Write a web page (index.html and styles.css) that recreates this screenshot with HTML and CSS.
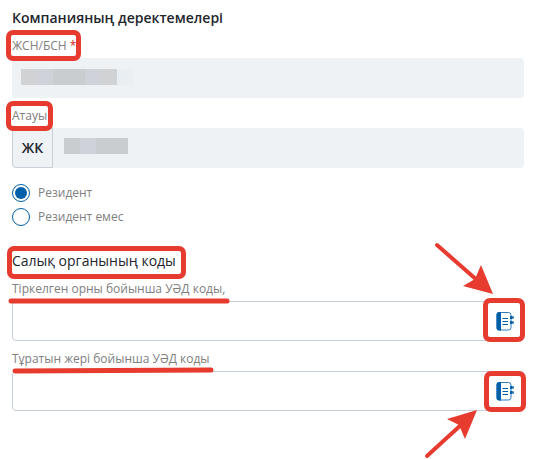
FILE: index.html
```html
<!DOCTYPE html>
<html lang="kk">
<head>
<meta charset="utf-8">
<title>Компанияның деректемелері</title>
<link rel="stylesheet" href="styles.css">
</head>
<body>
<main class="form">
  <h1 class="title">Компанияның деректемелері</h1>
  <div class="field">
    <div class="label">ЖСН/БСН <span class="required">*</span></div>
    <div class="input filled">
      <div class="mask"><i class="m1"></i><i class="m2"></i><i class="m3"></i><i class="m3"></i><i class="m2"></i><i class="m1"></i><i class="m4"></i></div>
    </div>
  </div>
  <div class="field">
    <div class="label">Атауы</div>
    <div class="input filled">
      <div class="prefix">ЖК</div>
      <div class="mask short"><i class="m3"></i><i class="m2"></i><i class="m3"></i><i class="m3"></i></div>
    </div>
  </div>
  <div class="radios">
    <div class="radio"><span class="circle checked"></span><span class="radio-text">Резидент</span></div>
    <div class="radio"><span class="circle"></span><span class="radio-text">Резидент емес</span></div>
  </div>
  <h2 class="subtitle">Салық органының коды</h2>
  <div class="field">
    <div class="label">Тіркелген орны бойынша УӘД коды,</div>
    <div class="input outlined">
      <svg class="book" viewBox="0 0 20 20"><use href="#book"/></svg>
    </div>
  </div>
  <div class="field">
    <div class="label">Тұратын жері бойынша УӘД коды</div>
    <div class="input outlined">
      <svg class="book" viewBox="0 0 20 20"><use href="#book"/></svg>
    </div>
  </div>
</main>
<svg class="defs" width="0" height="0">
  <symbol id="book" viewBox="0 0 20 20">
    <rect x="2" y="1.500" width="14" height="17.500" rx="2.500" fill="#fff" stroke="#2f7bb8" stroke-width="1"/>
    <path d="M6 1H4Q1.500 1 1.500 3.500v13.500q0 2.500 2.500 2.500h2z" fill="#005fa9"/>
    <path d="M7.500 7.500H13M7.500 10.500H13M7.500 13.500H13" stroke="#005fa9" stroke-width="1.200"/>
    <rect x="15" y="5" width="2.600" height="3" rx=".5" fill="#005fa9"/>
    <rect x="15" y="10" width="2.600" height="3" rx=".5" fill="#005fa9"/>
    <rect x="17" y="5.300" width="2" height="2.400" rx=".8" fill="#2f7bb8"/>
    <rect x="17" y="10.300" width="2" height="2.400" rx=".8" fill="#2f7bb8"/>
  </symbol>
</svg>
<svg class="marks" width="550" height="459" viewBox="0 0 550 459">
  <g fill="none" stroke="#e63b2e" stroke-width="5" stroke-linecap="round">
    <rect x="8.500" y="32.500" width="70" height="26" rx="4.500"/>
    <rect x="8.500" y="103.500" width="42" height="25" rx="4.500"/>
    <rect x="9.500" y="248.500" width="174" height="28" rx="4.500"/>
    <rect x="485.500" y="300.500" width="37" height="39" rx="4.500"/>
    <rect x="486.500" y="373.500" width="37" height="36" rx="4.500"/>
    <path d="M11 301L227 301"/>
    <path d="M15 371L211 370"/>
    <path d="M437 245L478 281" stroke-width="4"/>
    <path d="M427 456L462 424" stroke-width="4"/>
  </g>
  <path d="M493 294L463 286L475 279L481 265Z" fill="#e63b2e"/>
  <path d="M477 410L447 419L459 425L465 439Z" fill="#e63b2e"/>
</svg>
</body>
</html>
```
FILE: styles.css
```css
* { box-sizing: border-box; }
body {
  margin: 0;
  width: 550px;
  height: 459px;
  overflow: hidden;
  background: #fff;
  color: #23262d;
  font-family: "Open Sans", "Noto Sans", sans-serif;
}
.form {
  width: 512px;
  margin-left: 12px;
  padding-top: 8px;
}
.title {
  margin: 0;
  height: 20px;
  line-height: 20px;
  font-size: 14px;
  font-weight: 600;
}
.label {
  height: 24px;
  line-height: 24px;
  font-size: 12px;
  color: #808080;
  white-space: nowrap;
}
.field { padding-top: 6px; }
.required { color: #cf2a2a; }
.input {
  height: 40px;
  display: flex;
  align-items: center;
  border-radius: 4px;
}
.filled { background: #eef2f5; }
.outlined {
  border: 1px solid #c8d0da;
  justify-content: flex-end;
  padding-right: 8px;
}
.prefix {
  width: 41px;
  height: 40px;
  line-height: 38px;
  text-align: center;
  font-size: 14px;
  font-weight: 600;
  border: 1px solid #c8d0da;
  border-radius: 4px 0 0 4px;
}
.mask {
  display: flex;
  margin: -3px 0 0 9px;
}
.mask.short { margin: -4px 0 0 11px; }
.mask i { width: 16px; height: 16px; }
.m1 { background: #d1d2d4; }
.m2 { background: #cfd2d8; }
.m3 { background: #c9cdcf; }
.m4 { background: #e9eef3; }
.radios { padding-top: 13px; }
.radio {
  display: flex;
  align-items: center;
  gap: 8px;
  height: 24px;
  font-size: 12px;
  color: #808080;
}
.radio-text { padding-bottom: 2px; }
.circle {
  display: flex;
  align-items: center;
  justify-content: center;
  width: 18px;
  height: 18px;
  border: 1px solid #005fa9;
  border-radius: 50%;
}
.checked::after {
  content: "";
  width: 12px;
  height: 12px;
  border-radius: 50%;
  background: #005fa9;
}
.subtitle {
  margin: 21px 0 0;
  height: 21px;
  line-height: 21px;
  font-size: 14px;
  font-weight: 400;
}
.book { width: 20px; height: 20px; }
.defs { position: absolute; }
.marks {
  position: absolute;
  top: 0;
  left: 0;
}
```
